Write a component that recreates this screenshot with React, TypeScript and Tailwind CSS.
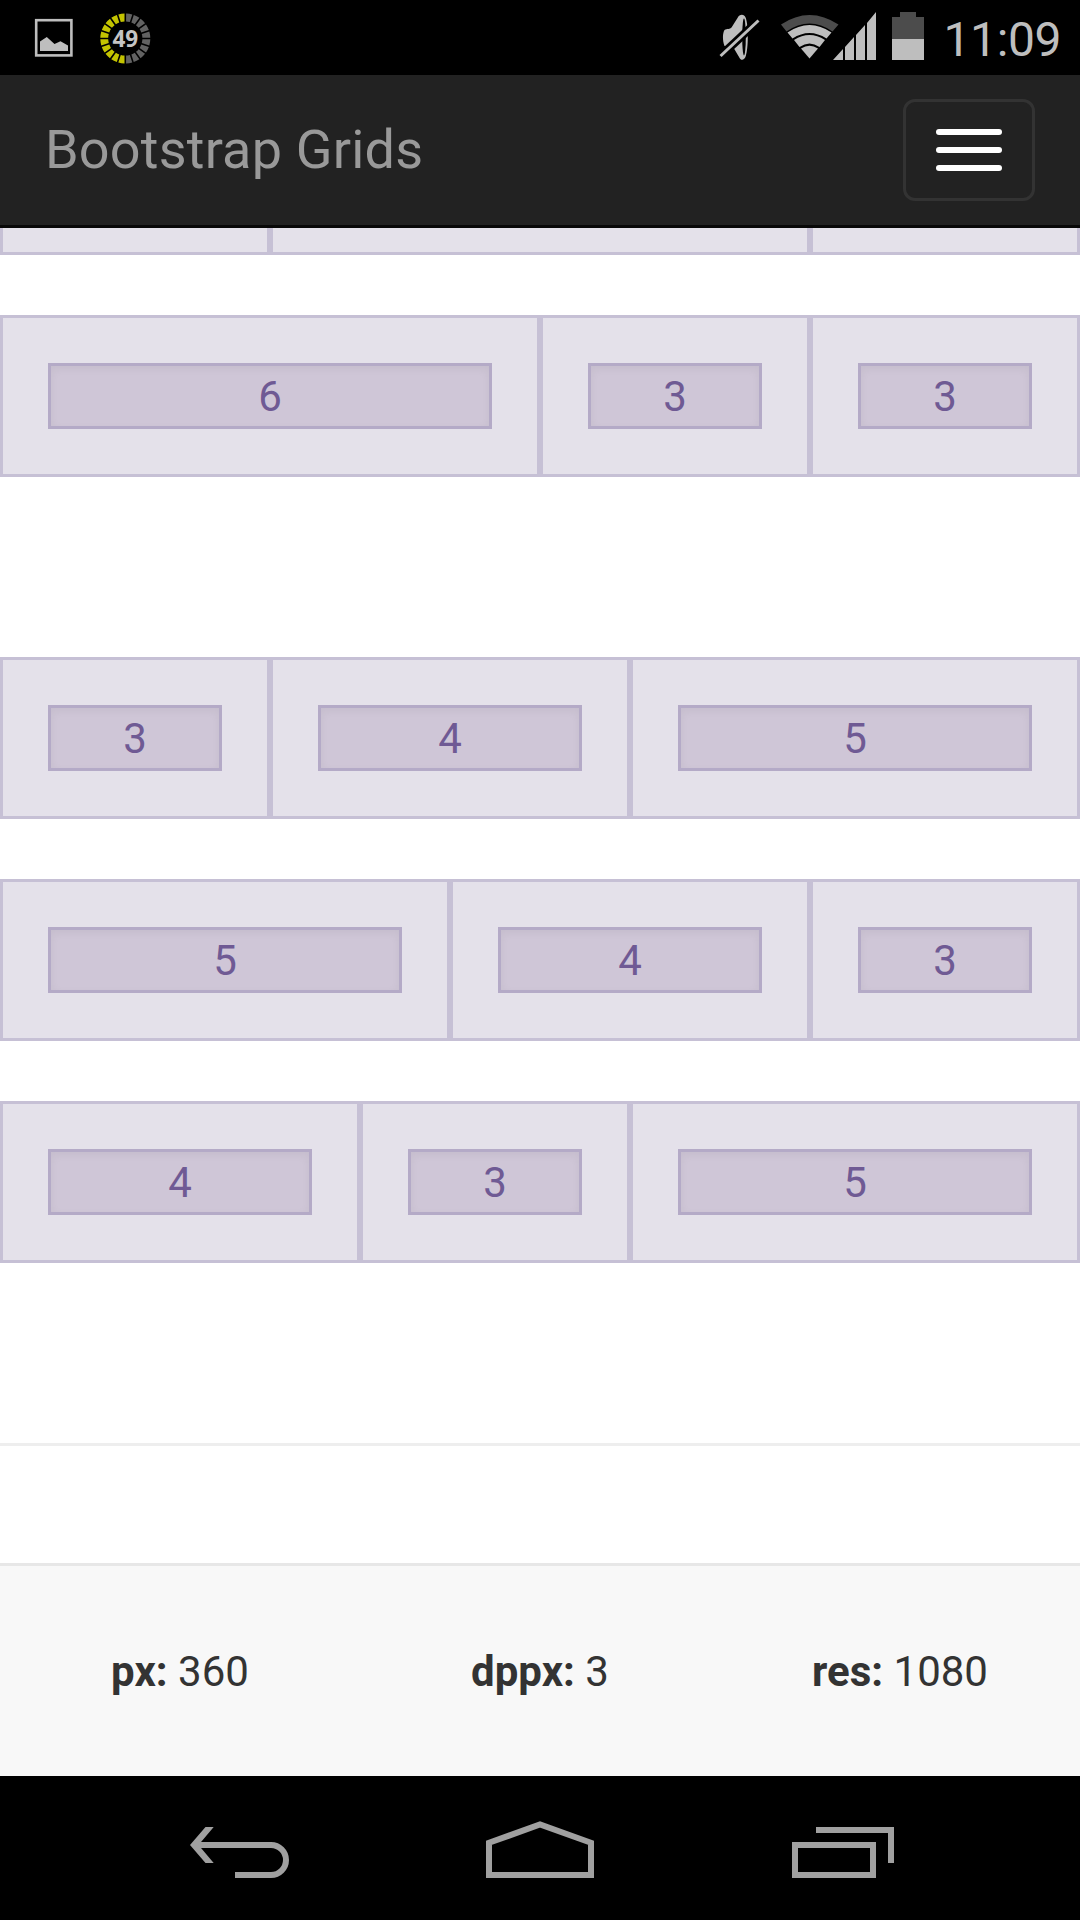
const rows = [
  { size: "h-[162px] mt-[60px]", spans: [6, 3, 3] },
  { size: "h-[162px] mt-[180px]", spans: [3, 4, 5] },
  { size: "h-[162px] mt-[60px]", spans: [5, 4, 3] },
  { size: "h-[162px] mt-[60px]", spans: [4, 3, 5] },
];

const spanClass: Record<number, string> = {
  3: "col-span-3",
  4: "col-span-4",
  5: "col-span-5",
  6: "col-span-6",
};

function StatusBar() {
  const ticks = Array.from({ length: 20 }, (_, i) => i);
  return (
    <div className="h-[75px] shrink-0 bg-black">
      <svg width="1080" height="75" viewBox="0 0 1080 75" fill="#bebebe">
        <rect x="36.2" y="20.2" width="35.2" height="35.2" fill="none" stroke="#bebebe" strokeWidth="2.6" />
        <path d="M40 51V41.5L46.8 37 54.5 44 60.5 41.3 68 45.5V51Z" />
        {ticks.map((i) => (
          <path
            key={i}
            d="M126.1 13.5A25 25 0 0 1 132.3 14.5L129.8 22A17 17 0 0 0 126.1 21.4Z"
            fill={i < 10 ? "#626262" : "#c3c300"}
            transform={`rotate(${i * 18} 125.3 38.5)`}
          />
        ))}
        <text x="125.3" y="47.3" textAnchor="middle" fontSize="22.5" fontWeight="700" fontFamily="'Open Sans', sans-serif" fill="#c4c4c4">49</text>
        <path d="M724.5 46C722.3 40 722.6 33 724.5 30 727 28.500 730 29.500 731.500 27.500L737.500 18C739.500 14 744 13.500 745.800 18 748.500 26 748.500 48 745.800 56 744.300 60.500 741 61 739.300 57.500L732.500 46Z" />
        <ellipse cx="744" cy="37" rx="1.8" ry="18.500" fill="#000" />
        <path d="M719 57.500 760 19" stroke="#000" strokeWidth="8.500" />
        <path d="M720.5 56 758.5 20.5" stroke="#bebebe" strokeWidth="3" />
        <path d="M781 24.5Q809.5 5.5 838.5 24.5L832.5 31.5Q809.5 15.500 786.500 31.500Z" fill="#4c4c4c" />
        <path d="M787.5 32.500Q809.500 17.500 831.500 32.500L826.500 38.500Q809.500 27.500 792.500 38.500Z" />
        <path d="M794 40Q809.500 30 825 40L819.500 47Q809.500 40 799.500 47Z" />
        <path d="M801 48.500Q809.500 43 818 48.500L809.500 58.500Z" />
        <path d="M833 60 843 49V60ZM845 60V47L854 37V60ZM856 60V35L865 25V60ZM867 60V23L876 12V60Z" />
        <path d="M892 39V17H900V12H916V17H924V39Z" fill="#4c4c4c" />
        <path d="M892 39H924V60H892Z" />
        <text x="943.5" y="56" fontSize="48" fontFamily="Roboto, sans-serif" textLength="118">11:09</text>
      </svg>
    </div>
  );
}

function Navbar() {
  return (
    <header className="flex h-[153px] shrink-0 items-center justify-between border-b-[3px] border-[#080808] bg-[#222] px-[45px]">
      <span className="text-[54px] leading-[60px] tracking-[0.2px] text-[#999]">Bootstrap Grids</span>
      <button className="flex h-[102px] w-[132px] flex-col items-center justify-center gap-[12px] rounded-[12px] border-[3px] border-[#333]">
        <span className="h-[6px] w-[66px] rounded-[3px] bg-white" />
        <span className="h-[6px] w-[66px] rounded-[3px] bg-white" />
        <span className="h-[6px] w-[66px] rounded-[3px] bg-white" />
      </button>
    </header>
  );
}

function NavigationKeys() {
  return (
    <nav className="h-[144px] shrink-0 bg-black">
      <svg width="1080" height="144" viewBox="0 1776 1080 144" fill="none" stroke="#a0a0a0" strokeWidth="6">
        <path d="M198 1845H271A15 15 0 0 1 271 1875H235" />
        <path d="M205.500 1827H213.700L198.500 1845 213.700 1863H205.500L190 1845Z" fill="#a0a0a0" stroke="none" />
        <path d="M489 1842.800 540 1824.500 591 1842.800V1875H489Z" />
        <path d="M795 1845H873V1875H795ZM816 1830H891V1863" />
      </svg>
    </nav>
  );
}

export default function App() {
  return (
    <div className="flex h-[1920px] w-[1080px] flex-col overflow-hidden bg-white font-['Roboto',sans-serif]">
      <StatusBar />
      <Navbar />
      <main className="flex h-[1335px] shrink-0 flex-col">
        <div className="grid h-[27px] shrink-0 grid-cols-12">
          <div className="col-span-3 border-[3px] border-t-0 border-[#c6c0d5] bg-[#e4e1ea]" />
          <div className="col-span-6 border-[3px] border-t-0 border-[#c6c0d5] bg-[#e4e1ea]" />
          <div className="col-span-3 border-[3px] border-t-0 border-[#c6c0d5] bg-[#e4e1ea]" />
        </div>
        {rows.map((row, r) => (
          <div key={r} className={`grid shrink-0 grid-cols-12 ${row.size}`}>
            {row.spans.map((n, c) => (
              <div key={c} className={`${spanClass[n]} border-[3px] border-[#c6c0d5] bg-[#e4e1ea] p-[45px]`}>
                <div className="flex h-[66px] items-center justify-center border-[3px] border-[#b4aac7] bg-[#cfc6d7] pt-[2px] text-[42px] leading-[58px] text-[#6f5a94] shadow-[inset_0_3px_9px_rgba(0,0,0,0.05)]">
                  {n}
                </div>
              </div>
            ))}
          </div>
        ))}
        <hr className="mt-[180px] border-t-[3px] border-[#eee]" />
      </main>
      <footer className="grid h-[213px] shrink-0 grid-cols-3 items-center border-t-[3px] border-[#e7e7e7] bg-[#f8f8f8] pt-[2px] text-center text-[42px] leading-[60px] text-[#333]">
        <p><b>px:</b> 360</p>
        <p><b>dppx:</b> 3</p>
        <p><b>res:</b> 1080</p>
      </footer>
      <NavigationKeys />
    </div>
  );
}
